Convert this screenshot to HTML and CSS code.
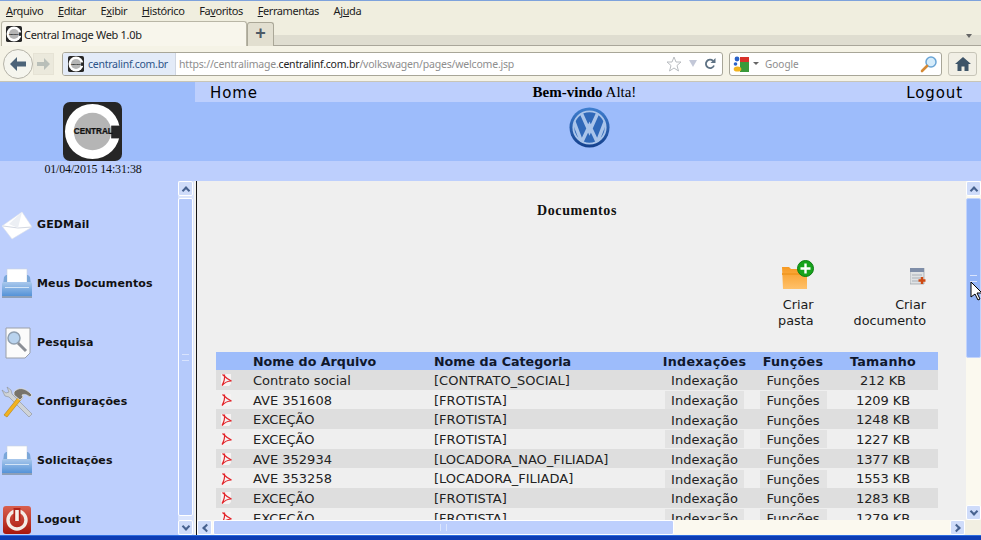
FILE: index.html
```html
<!DOCTYPE html>
<html lang="pt-BR">
<head>
<meta charset="utf-8">
<title>Central Image Web 1.0b</title>
<link rel="stylesheet" href="styles.css">
</head>
<body>
<svg class="defs" width="0" height="0" aria-hidden="true">
  <defs>
    <linearGradient id="trayg" x1="0" y1="0" x2="0" y2="1"><stop offset="0" stop-color="#a9c8ec"/><stop offset="1" stop-color="#4f8fd6"/></linearGradient>
    <linearGradient id="foldg" x1="0" y1="0" x2="0" y2="1"><stop offset="0" stop-color="#f79a22"/><stop offset="1" stop-color="#ffc16a"/></linearGradient>
    <linearGradient id="powg" x1="0" y1="0" x2="0" y2="1"><stop offset="0" stop-color="#d9604f"/><stop offset="1" stop-color="#a8160c"/></linearGradient>
    <linearGradient id="vwg" x1="0" y1="0" x2="0" y2="1"><stop offset="0" stop-color="#3f7fd0"/><stop offset="1" stop-color="#14408c"/></linearGradient>
    <clipPath id="vwclip"><circle cx="21" cy="21" r="16.500"/></clipPath>
    <symbol id="central" viewBox="0 0 60 60">
      <rect width="60" height="60" rx="7" fill="#262626"/>
      <circle cx="30" cy="30" r="28" fill="#fff"/>
      <circle cx="30" cy="30" r="19" fill="#b5b5b5"/>
      <rect x="49" y="24" width="11" height="13" fill="#262626"/>
      <text x="11" y="33" class="logotext">CENTRAL</text>
    </symbol>
    <symbol id="pdf" viewBox="0 0 13 14">
      <path d="M1 1h10v10l-2 2H1z" fill="#f6f3f3"/>
      <path d="M2.500 1.500C5 4 8 6.500 11.500 8 8 8 4.500 9.500 2 12.500 4 9 5 5 4.500 1.500" fill="none" stroke="#e2252b" stroke-width="1.200"/>
    </symbol>
    <symbol id="printer" viewBox="0 0 32 30">
      <rect x="6" y="0" width="20" height="15" fill="#fff" stroke="#c9d3e2" stroke-width=".6"/>
      <path d="M5 6h1v10H2l1-8zM26 6h1l2 2 1 8h-4z" fill="#7ba7d9"/>
      <rect x="1" y="13" width="30" height="15" rx="1.500" fill="url(#trayg)"/>
      <rect x="1" y="27" width="30" height="2" fill="#8d9fb8"/>
      <rect x="4" y="18" width="24" height="1" fill="#d2e4f7"/>
    </symbol>
  </defs>
</svg>
<div class="browser">
  <div class="menubar">
    <span class="menu"><u>A</u>rquivo</span><span class="menu"><u>E</u>ditar</span><span class="menu">E<u>x</u>ibir</span><span class="menu"><u>H</u>istórico</span><span class="menu">Fa<u>v</u>oritos</span><span class="menu"><u>F</u>erramentas</span><span class="menu">Aj<u>u</u>da</span>
  </div>
  <div class="tabstrip">
    <div class="tab"><svg class="fav"><use href="#central"/></svg><span>Central Image Web 1.0b</span></div>
    <div class="newtab">+</div>
    <div class="tabfill"><span class="tabarrow"></span></div>
  </div>
  <div class="toolbar">
    <div class="navbtns">
      <div class="backbtn"><svg width="18" height="14" viewBox="0 0 18 14"><path d="M8 0 1 7l7 7V9.500h9v-5H8z" fill="#4c6378"/></svg></div>
      <div class="fwdbtn"><svg width="13" height="12" viewBox="0 0 13 12"><path d="M7 0l6 6-6 6V8H0V4h7z" fill="#b9bfb9"/></svg></div>
    </div>
    <div class="urlbar">
      <div class="identity"><svg class="fav"><use href="#central"/></svg><span>centralinf.com.br</span></div>
      <div class="url"><span class="dim">https://centralimage.</span>centralinf.com.br<span class="dim">/volkswagen/pages/welcome.jsp</span></div>
      <svg class="star" width="16" height="16" viewBox="0 0 16 16"><path d="M8 1l2 5h5l-4 3.500 1.500 5.500L8 12l-4.500 3L5 9.500 1 6h5z" fill="#fff" stroke="#b8bcc0"/></svg>
      <span class="urldrop"></span>
      <svg class="reload" width="12" height="12" viewBox="0 0 12 12"><path d="M10 7.500a4.200 4.200 0 1 1-1-4.700" fill="none" stroke="#5d7183" stroke-width="1.800"/><path d="M11.500 0v5h-5z" fill="#5d7183"/></svg>
    </div>
    <div class="searchbar">
      <svg width="16" height="16" viewBox="0 0 16 16"><path d="M7 1h9v15H7z" fill="#3a9a3a"/><path d="M7 1h9v5H7z" fill="#d8322a"/><circle cx="4" cy="3" r="2.400" fill="#2a62c8"/><circle cx="2.500" cy="8" r="1.800" fill="#2a62c8"/><ellipse cx="4.500" cy="13" rx="3.800" ry="2.600" fill="#f2b41e"/></svg>
      <span class="searchdrop"></span>
      <span class="searchlabel">Google</span>
      <svg class="glass" width="18" height="18" viewBox="0 0 18 18"><circle cx="11" cy="7" r="5" fill="#d5ecfb" stroke="#6aa5d6" stroke-width="1.500"/><path d="M7 11l-5 5" stroke="#d58a35" stroke-width="2.600" stroke-linecap="round"/></svg>
    </div>
    <div class="homebtn"><svg width="16" height="14" viewBox="0 0 16 14"><path d="M8 0 0 7h2.500v7H6.500V9.500h3V14h4V7H16z" fill="#3d5468"/></svg></div>
  </div>
</div>

<header class="pagehead">
  <div class="brand">
    <div class="logoband"><svg class="logo"><use href="#central"/></svg></div>
    <div class="datestrip">01/04/2015 14:31:38</div>
  </div>
  <div class="headmain">
    <nav class="topnav">
      <span class="topbtn">Home</span>
      <span class="welcome"><b>Bem-vindo</b> Alta!</span>
      <span class="topbtn">Logout</span>
    </nav>
    <div class="vwband">
      <svg class="vw" viewBox="0 0 42 42">
        <circle cx="21" cy="21" r="20.500" fill="url(#vwg)"/>
        <circle cx="21" cy="21" r="16.500" fill="#2f68b8"/>
        <g clip-path="url(#vwclip)"><path d="M12 5l9 20 9-20M5 15l8 21 8-17 8 17 8-21" fill="none" stroke="#a9c4ea" stroke-width="3.600"/></g>
        <circle cx="21" cy="21" r="16.500" fill="none" stroke="#a9c4ea" stroke-width="2"/>
      </svg>
    </div>
    <div class="headstrip"></div>
  </div>
</header>

<div class="workspace">
  <aside class="sidebar">
    <div class="sideitem">
      <svg class="sideicon" viewBox="0 0 32 32"><path d="M1 17 21 3l10 15-20 12z" fill="#fff" stroke="#dfe3ea" stroke-width=".6"/><path d="M2 17l15 2 14-1" fill="none" stroke="#d3d8e2"/><path d="M21 3 8 15l9 4z" fill="#eceff4"/></svg>
      <span>GEDMail</span>
    </div>
    <div class="sideitem">
      <svg class="sideicon"><use href="#printer"/></svg>
      <span>Meus Documentos</span>
    </div>
    <div class="sideitem">
      <svg class="sideicon" viewBox="0 0 32 32"><path d="M5 1h24v25l-5 5H5z" fill="#fbfbfb" stroke="#9a9fa8"/><circle cx="13" cy="11" r="6" fill="#b9d3ee" stroke="#8f9fb0" stroke-width="1.500"/><path d="M17 16l8 8" stroke="#8b8f96" stroke-width="3"/></svg>
      <span>Pesquisa</span>
    </div>
    <div class="sideitem">
      <svg class="sideicon" viewBox="0 0 32 32"><path d="M1 4l3 6 4 1 20 20 3-3L11 8l-1-4-4-3 2 5-3 1z" fill="#cfd3d6" stroke="#8c9094" stroke-width=".6"/><path d="M3 29 19 9l3 2L6 31z" fill="#f2b320" stroke="#b57f0e" stroke-width=".6"/><path d="M13 6c4-5 11-5 18 3l-2 2c-4-3-6-3-8-2l1 2-3 3-6-5z" fill="#77736a" stroke="#e4e4e0" stroke-width=".8"/></svg>
      <span>Configurações</span>
    </div>
    <div class="sideitem">
      <svg class="sideicon"><use href="#printer"/></svg>
      <span>Solicitações</span>
    </div>
    <div class="sideitem">
      <svg class="sideicon" viewBox="0 0 32 32"><rect x="2" y="2" width="28" height="28" rx="3" fill="url(#powg)"/><circle cx="16" cy="16" r="9" fill="none" stroke="#f4ece6" stroke-width="3.400"/><path d="M16 4v13" stroke="#b2241a" stroke-width="7"/><path d="M16 6v11" stroke="#f7f1ea" stroke-width="3.600"/></svg>
      <span>Logout</span>
    </div>
  </aside>
  <div class="vscroll vscroll-side">
    <div class="sbtn"><span class="chev up"></span></div>
    <div class="thumb thumb-side"><span class="grip"></span></div>
    <div class="sbtn"><span class="chev down"></span></div>
  </div>
  <div class="divider"></div>
  <div class="mainwrap">
    <div class="mainrow">
      <main class="main">
        <h1 class="title">Documentos</h1>
        <div class="actions">
          <div class="action action-folder">
            <svg class="folder" viewBox="0 0 33 30"><path d="M1 7h7l2 2h16v20H2z" fill="url(#foldg)"/><path d="M1 13h27v2H1z" fill="#f29a24"/><circle cx="24.500" cy="8.500" r="8" fill="#17a31c" stroke="#0d7c12"/><path d="M24.500 3.500v10M19.500 8.500h10" stroke="#fff" stroke-width="2.400"/></svg>
            <div class="actionlabel">Criar<br>pasta</div>
          </div>
          <div class="action action-doc">
            <svg class="docicon" viewBox="0 0 16 17"><path d="M0 0h14v16H0z" fill="#dfe2e4" stroke="#8b9097" stroke-width=".6"/><path d="M0 0h14v4H0z" fill="#7f8ea8"/><path d="M2 7h10M2 10h10M2 13h7" stroke="#aab0b8"/><path d="M12 9v7M8.500 12.500h7" stroke="#cf4a12" stroke-width="2.400"/></svg>
            <div class="actionlabel">Criar<br>documento</div>
          </div>
        </div>
        <div class="doctable">
          <div class="row head"><span></span><span>Nome do Arquivo</span><span>Nome da Categoria</span><span class="c">Indexações</span><span class="c">Funções</span><span class="c size">Tamanho</span></div>
          <div class="row odd"><svg class="pdf"><use href="#pdf"/></svg><span>Contrato social</span><span>[CONTRATO_SOCIAL]</span><span class="c"><a class="cellbtn idx">Indexação</a></span><span class="c"><a class="cellbtn fn">Funções</a></span><span class="c size">212 KB</span></div>
          <div class="row"><svg class="pdf"><use href="#pdf"/></svg><span>AVE 351608</span><span>[FROTISTA]</span><span class="c"><a class="cellbtn idx">Indexação</a></span><span class="c"><a class="cellbtn fn">Funções</a></span><span class="c size">1209 KB</span></div>
          <div class="row odd"><svg class="pdf"><use href="#pdf"/></svg><span>EXCEÇÃO</span><span>[FROTISTA]</span><span class="c"><a class="cellbtn idx">Indexação</a></span><span class="c"><a class="cellbtn fn">Funções</a></span><span class="c size">1248 KB</span></div>
          <div class="row"><svg class="pdf"><use href="#pdf"/></svg><span>EXCEÇÃO</span><span>[FROTISTA]</span><span class="c"><a class="cellbtn idx">Indexação</a></span><span class="c"><a class="cellbtn fn">Funções</a></span><span class="c size">1227 KB</span></div>
          <div class="row odd"><svg class="pdf"><use href="#pdf"/></svg><span>AVE 352934</span><span>[LOCADORA_NAO_FILIADA]</span><span class="c"><a class="cellbtn idx">Indexação</a></span><span class="c"><a class="cellbtn fn">Funções</a></span><span class="c size">1377 KB</span></div>
          <div class="row"><svg class="pdf"><use href="#pdf"/></svg><span>AVE 353258</span><span>[LOCADORA_FILIADA]</span><span class="c"><a class="cellbtn idx">Indexação</a></span><span class="c"><a class="cellbtn fn">Funções</a></span><span class="c size">1553 KB</span></div>
          <div class="row odd"><svg class="pdf"><use href="#pdf"/></svg><span>EXCEÇÃO</span><span>[FROTISTA]</span><span class="c"><a class="cellbtn idx">Indexação</a></span><span class="c"><a class="cellbtn fn">Funções</a></span><span class="c size">1283 KB</span></div>
          <div class="row"><svg class="pdf"><use href="#pdf"/></svg><span>EXCEÇÃO</span><span>[FROTISTA]</span><span class="c"><a class="cellbtn idx">Indexação</a></span><span class="c"><a class="cellbtn fn">Funções</a></span><span class="c size">1279 KB</span></div>
        </div>
      </main>
      <div class="vscroll vscroll-main">
        <div class="sbtn"><span class="chev up"></span></div>
        <div class="thumb thumb-main"><span class="grip"></span></div>
        <div class="track"></div>
        <div class="sbtn"><span class="chev down"></span></div>
      </div>
    </div>
    <div class="hscroll">
      <div class="sbtn"><span class="chev left"></span></div>
      <div class="hthumb"><span class="hgrip"></span></div>
      <div class="htrack"></div>
      <div class="sbtn"><span class="chev right"></span></div>
      <div class="corner"></div>
    </div>
  </div>
</div>
<div class="taskbar"></div>
<svg class="cursor" width="12" height="20" viewBox="0 0 12 20"><path d="M1 1v15l4-3 3 6 2-1-3-6h5z" fill="#fff" stroke="#000"/></svg>
</body>
</html>
```
FILE: styles.css
```css
* { box-sizing: border-box; }
html, body { margin: 0; padding: 0; }
body {
  width: 981px; height: 540px; overflow: hidden; position: relative;
  display: flex; flex-direction: column;
  background: #bdcffd;
  font-family: "DejaVu Sans", sans-serif;
  color: #111;
}
.defs { position: absolute; }
.logotext { font: 900 8.300px "Liberation Sans", sans-serif; fill: #111; stroke: #111; stroke-width: .25px; }

/* browser chrome */
.browser { flex: none; font-family: "Noto Sans", sans-serif; background: #f0eedf; }
.menubar {
  height: 21px; border-top: 1px solid #7ea2dc; padding: 2px 0 0 6px;
  display: flex; gap: 14.700px; font-size: 11px; letter-spacing: -.4px; line-height: 15px; color: #1c1c1c; background: #f0eedf;
}
.tabstrip { height: 25px; display: flex; align-items: flex-end; }
.tab {
  width: 246px; height: 25px; background: #f8f6ec; border: 1px solid #b9b6a6; border-bottom: 0;
  border-radius: 3px 3px 0 0; display: flex; align-items: center; gap: 2px; padding-left: 4px;
  font-size: 11px; letter-spacing: -.3px; color: #222; margin-left: 1px;
}
.fav { width: 16px; height: 16px; flex: none; }
.newtab {
  width: 27px; height: 24px; background: #e2dfd0; border: 1px solid #aaa797; border-bottom: 0; border-radius: 3px 3px 0 0;
  text-align: center; font: 700 18px/21px "Liberation Sans", sans-serif; color: #4c5a66;
}
.tabfill { flex: 1; height: 11px; background: #dfddd0; border-bottom: 1px solid #a9a69a; position: relative; }
.tabarrow { position: absolute; right: 9px; top: -1px; border: 3px solid transparent; border-top: 4px solid #666; }
.toolbar {
  height: 36px; background: #f5f3e6; border-bottom: 1px solid #c8c5b6;
  display: flex; align-items: center; padding: 0 0 0 3px; position: relative;
}
.navbtns { width: 58px; display: flex; align-items: center; flex: none; }
.backbtn {
  width: 30px; height: 30px; border-radius: 50%; background: #f5f5ee; border: 1px solid #b5b3a8;
  display: flex; align-items: center; justify-content: center; flex: none;
}
.fwdbtn { width: 21px; height: 22px; background: #ebe9dc; border: 1px solid #e6e3d5; display: flex; align-items: center; justify-content: center; flex: none; }
.urlbar {
  width: 661px; height: 24px; margin-left: 1px; background: #fff; border: 1px solid #a8a698; border-radius: 3px;
  display: flex; align-items: center; font-size: 10.500px; letter-spacing: -.2px; color: #222; flex: none; overflow: hidden;
}
.identity { height: 22px; width: 113px; background: #e3ebf8; border-right: 1px solid #cfd6e2; display: flex; align-items: center; gap: 4px; padding-left: 5px; color: #2d5388; flex: none; letter-spacing: -.25px; }
.url { flex: 1; padding-left: 3px; white-space: nowrap; }
.dim { color: #8e8e8e; }
.star { margin-right: 7px; }
.urldrop { border: 4px solid transparent; border-top: 7px solid #c3c8d8; border-bottom: 0; margin-right: 7px; }
.reload { margin-right: 6px; }
.searchbar {
  width: 213px; height: 24px; margin-left: 6px; background: #fff; border: 1px solid #a8a698; border-radius: 3px;
  display: flex; align-items: center; padding-left: 3px; font-size: 10px; flex: none;
}
.searchdrop { border: 3px solid transparent; border-top: 3px solid #666; border-bottom: 0; margin-left: 4px; }
.searchlabel { color: #8e8e8e; margin-left: 6px; flex: 1; }
.glass { margin-right: 3px; }
.homebtn {
  width: 29px; height: 24px; margin-left: 6px; background: #f1efe5; border: 1px solid #c7c5b8; border-radius: 3px;
  display: flex; align-items: center; justify-content: center; flex: none;
}

/* page header */
.pagehead { flex: none; height: 99px; display: flex; }
.brand { width: 195px; flex: none; display: flex; flex-direction: column; }
.logoband { height: 79px; background: #9dbcfb; padding: 20px 0 0 63px; }
.logo { width: 59px; height: 59px; display: block; }
.datestrip {
  height: 20px; background: #bdcffd; text-align: center; padding-right: 9px;
  font: 12px/17px "Liberation Serif", serif; letter-spacing: -.17px;
}
.headmain { flex: 1; display: flex; flex-direction: column; }
.topnav {
  height: 20px; background: #bdcffd; display: grid; grid-template-columns: 1fr auto 1fr; align-items: center;
  padding: 1px 18px 0 15px;
}
.topnav .topbtn:last-child { text-align: right; }
.topbtn { font-size: 15px; letter-spacing: .9px; color: #000; }
.welcome { font: 15px "Liberation Serif", serif; color: #000; margin-right: 4px; }
.vwband { height: 59px; background: #9dbcfb; padding: 5px 0 0 374px; }
.vw { width: 41px; height: 41px; display: block; }
.headstrip { flex: 1; background: #bdcffd; }

/* work area */
.workspace { flex: 1; min-height: 0; display: flex; background: #bdcffd; }
.sidebar { width: 178px; flex: none; padding: 14px 0 0 1px; overflow: hidden; height: 354px; }
.sideitem { height: 59px; display: flex; align-items: center; gap: 4px; font-weight: 700; font-size: 11px; letter-spacing: .13px; color: #111; }
.sideicon { width: 32px; height: 32px; flex: none; }
.vscroll { width: 16px; flex: none; display: flex; flex-direction: column; }
.vscroll-side { background: #dbe5fd; height: 354px; }
.sbtn {
  width: 15px; height: 15px; flex: none; background: #cfdcfa; border: 1px solid #fff; border-radius: 2px;
  display: flex; align-items: center; justify-content: center;
}
.chev { width: 6px; height: 6px; border: 2px solid #47628f; border-width: 2px 0 0 2px; }
.chev.up { transform: translateY(1.500px) rotate(45deg); }
.chev.down { transform: translateY(-1.500px) rotate(225deg); }
.chev.left { transform: translateX(1.500px) rotate(-45deg); }
.chev.right { transform: translateX(-1.500px) rotate(135deg); }
.thumb { flex: 1; margin: 2px 0; width: 15px; border: 1px solid #fff; background: #b5cafb; border-radius: 2px; display: flex; align-items: center; justify-content: center; }
.thumb-main { flex: none; height: 160px; background: #94b5f8; border-color: #c2d3fc; }
.grip { width: 7px; height: 7px; border-top: 1px solid #d8e3fd; border-bottom: 1px solid #d8e3fd; }
.thumb-side { margin-top: 2px; margin-bottom: 4px; }
.divider { width: 3px; flex: none; background: #f2f2f0; border-right: 1px solid #151515; height: 354px; }
.mainwrap { flex: 1; min-width: 0; display: flex; flex-direction: column; height: 354px; }
.mainrow { height: 339px; flex: none; display: flex; }
.main { width: 769px; flex: none; height: 339px; overflow: hidden; background: #efefef; padding: 0 0 0 19px; }
.title { margin: 0; height: 79px; padding: 21px 0 0 0; font: 700 14px/18px "Liberation Serif", serif; text-align: center; letter-spacing: .6px; width: 722px; color: #111; }
.actions { height: 92px; width: 722px; display: flex; justify-content: flex-end; font-size: 12.800px; line-height: 16px; color: #1a1a1a; }
.action { display: flex; flex-direction: column; align-items: flex-end; text-align: right; }
.action-folder { margin-right: 40px; }
.action-doc { margin-right: 12px; }
.folder { width: 33px; height: 30px; }
.docicon { width: 16px; height: 17px; margin: 8px 0 5px; }
.actionlabel { margin-top: 7px; }
.doctable { width: 722px; font-size: 13px; color: #222; }
.row { display: grid; grid-template-columns: 37px 181px 226px 89px 88px 101px; height: 19.700px; padding-top: 1px; align-items: center; white-space: nowrap; }
.row.head { height: 18px; padding-top: 0; background: #9dbcfb; font-weight: 700; font-size: 12.700px; color: #10182c; }
.row.head .c { letter-spacing: .3px; }
.row.odd { background: #dedede; }
.c { text-align: center; }
.size { padding-right: 9px; letter-spacing: -.1px; }
.cellbtn { display: block; height: 18px; line-height: 20px; margin: 0 auto; background: #e3e3e3; }
.odd .cellbtn { background: transparent; }
.idx { width: 79px; }
.fn { width: 67px; }
.pdf { width: 13px; height: 14px; margin-left: 4px; }
.vscroll-main { width: 15px; background: #fbf9ef; }
.track { flex: 1; background: #fbf9ef; }
.hscroll { height: 15px; flex: none; display: flex; background: #fbf9ef; }
.hthumb { width: 461px; flex: none; margin: 0 1px; background: #bdcffd; border: 1px solid #fff; border-radius: 2px; display: flex; align-items: center; justify-content: center; }
.hgrip { width: 7px; height: 7px; border-left: 1px solid #dbe5fd; border-right: 1px solid #dbe5fd; }
.htrack { flex: 1; }
.corner { width: 16px; flex: none; background: #f2efe2; }
.taskbar { flex: none; height: 5px; background: #0d3db4; border-top: 1px solid #2d6de0; }
.cursor { position: absolute; left: 970px; top: 281px; }
```
